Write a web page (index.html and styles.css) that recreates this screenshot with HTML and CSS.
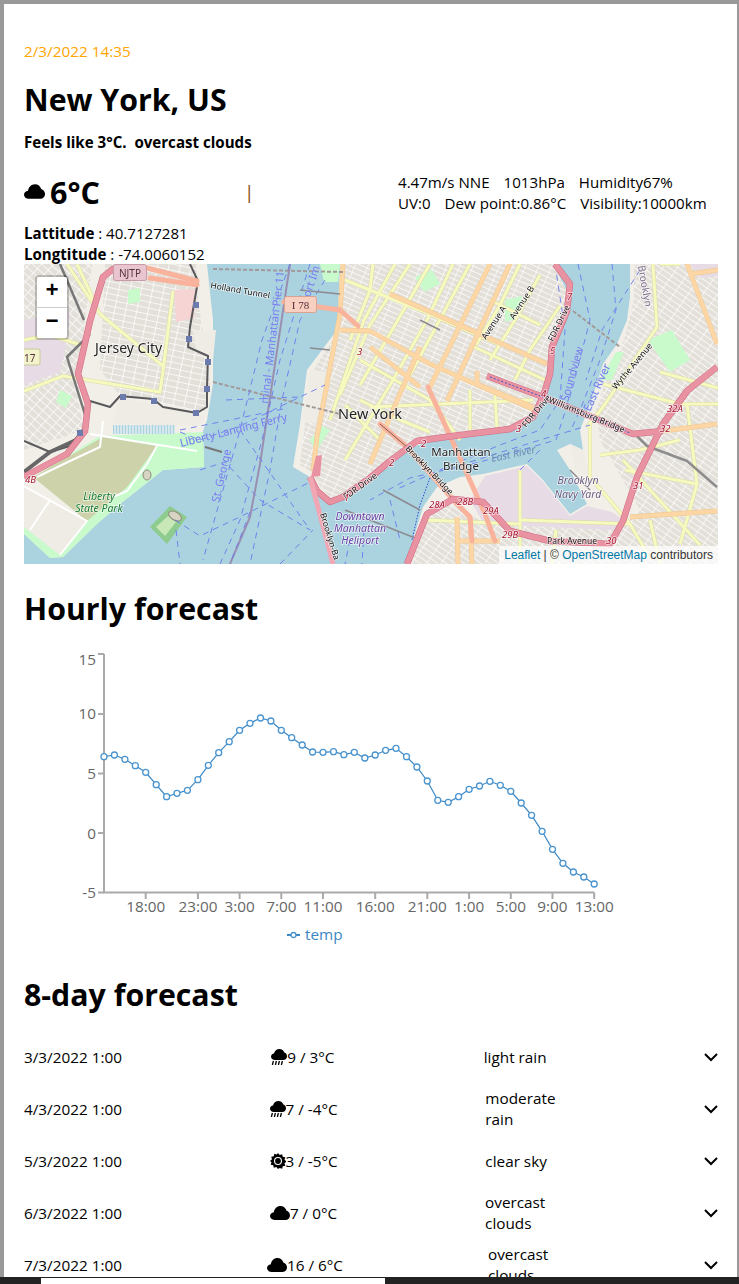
FILE: index.html
```html
<!DOCTYPE html>
<html lang="en">
  <head>
    <meta charset="UTF-8" />
    <meta name="viewport" content="width=device-width, initial-scale=1.0" />
    <title>Weather</title>
    <link rel="stylesheet" href="styles.css">
  </head>
  <body>
    <svg class="icon-defs" width="0" height="0">
      <defs>
        <symbol id="i-cloud" viewBox="0 0 20 14">
          <path d="M4.5 14C2 14 0 12.3 0 10.1 0 8 1.7 6.4 3.8 6.2 4.3 2.7 7 0 10.4 0c2.900 0 5.300 1.900 6 4.600 1.900.5 3.600 2.600 3.600 4.800 0 2.700-2 4.600-4.600 4.600z" />
        </symbol>
        <symbol id="i-rain" viewBox="0 0 16 16">
          <path d="M3.800 11C1.700 11 0 9.600 0 7.700 0 6 1.300 4.700 3 4.500 3.500 1.800 5.700 0 8.400 0c2.400 0 4.400 1.500 5 3.600 1.500.4 2.600 1.900 2.600 3.600 0 2.200-1.600 3.800-3.700 3.800z" />
          <path class="i-drops" d="M2.400 12 1.400 16M5.400 12 4.400 16M8.400 12 7.400 16M11.400 12 10.400 16" />
        </symbol>
        <symbol id="i-sun" viewBox="0 0 16 16">
          <path fill-rule="evenodd" d="M8 0l1.700 2 2.500-.8.500 2.600 2.600.5-.8 2.500 2 1.700-2 1.700.8 2.500-2.600.5-.5 2.600-2.500-.8L8 16l-1.700-2-2.500.8-.5-2.600-2.600-.5.8-2.500L0 8l2-1.700-.8-2.500 2.600-.5.5-2.600 2.500.8zM8 4a4 4 0 1 0 0 8 4 4 0 0 0 0-8z" />
          <circle cx="8" cy="8" r="2.900" />
        </symbol>
        <symbol id="i-chevron" viewBox="0 0 16 16">
          <path class="i-chev" d="M2 5l6 6 6-6" />
        </symbol>
      </defs>
    </svg>

    <div class="page">
      <p class="stamp">2/3/2022 14:35</p>
      <h1>New York, US</h1>
      <p class="feels">Feels like 3°C.&nbsp; overcast clouds</p>

      <div class="now">
        <div class="now-temp">
          <svg class="now-icon"><use href="#i-cloud" /></svg>
          <span>6°C</span>
        </div>
        <span class="now-sep">|</span>
        <div class="now-stats">
          <div class="stat-row">
            <span>4.47m/s NNE</span>
            <span>1013hPa</span>
            <span>Humidity67%</span>
          </div>
          <div class="stat-row">
            <span>UV:0</span>
            <span>Dew point:0.86°C</span>
            <span>Visibility:10000km</span>
          </div>
        </div>
      </div>

      <div class="coords">
        <div><b>Lattitude</b> : 40.7127281</div>
        <div><b>Longtitude</b> : -74.0060152</div>
      </div>

      <div class="map">
        <svg class="map-art" viewBox="24 264 694 300" width="694" height="300">
          <defs>
            <pattern id="g-jersey" width="11" height="6" patternUnits="userSpaceOnUse" patternTransform="rotate(12)">
              <rect width="11" height="6" fill="#e3dfd9" />
              <path d="M0 0H11M0 0V6" stroke="#fff" stroke-width="1.5" />
            </pattern>
            <pattern id="g-west" width="9" height="6" patternUnits="userSpaceOnUse" patternTransform="rotate(42)">
              <rect width="9" height="6" fill="#e3dfd9" />
              <path d="M0 0H9M0 0V6" stroke="#fff" stroke-width="1.4" />
            </pattern>
            <pattern id="g-man" width="12" height="5" patternUnits="userSpaceOnUse" patternTransform="rotate(24)">
              <rect width="12" height="5" fill="#e3dfd9" />
              <path d="M0 0H12M0 0V5" stroke="#fff" stroke-width="1.3" />
            </pattern>
            <pattern id="g-bk" width="12" height="5" patternUnits="userSpaceOnUse" patternTransform="rotate(35)">
              <rect width="12" height="5" fill="#e3dfd9" />
              <path d="M0 0H12M0 0V5" stroke="#fff" stroke-width="1.3" />
            </pattern>
            <pattern id="g-marina" width="3" height="8" patternUnits="userSpaceOnUse">
              <rect width="3" height="8" fill="#aad3df" />
              <path d="M1 0V8" stroke="#f4f7f7" stroke-width="1.2" />
            </pattern>
          </defs>

          <rect class="m-water" x="24" y="264" width="694" height="300" />

          <path class="m-land" d="M24 264H207L213 320 213 384 207 420 203 431 204 467 163 470 120 504 97 524 63 557 50 558 24 534Z" />
          <path class="m-land" d="M340 264H553L570 297 553 347 550 380 537 414 513 427 453 434 403 450 370 480 333 504 320 490 310 477 293 467 300 424 307 370 337 330Z" />
          <path class="m-land" d="M630 264H718V564H407L413 540 423 507 437 487 460 477 483 474 527 464 543 480 570 514 587 504 570 470 557 450 570 444 583 450 580 430 590 404 603 364 617 344 627 320 630 297Z" />

          <path fill="url(#g-jersey)" d="M105 264H196L198 300 204 340 210 384 205 412 120 395 100 370Z" />
          <path fill="url(#g-west)" d="M24 264H92L84 330 78 400 84 430 24 450Z" />
          <path fill="url(#g-man)" d="M342 264H553L570 297 553 347 550 380 537 414 513 427 453 434 403 450 370 478 333 500 320 486 312 472 300 465 305 424 312 372 338 332Z" />
          <path fill="url(#g-bk)" d="M634 264H718V564H410L426 510 440 500 480 520 620 528 640 510 600 440 596 410 610 368 624 340 634 300Z" />

          <path class="m-pink" d="M485 476 527 466 543 482 570 516 587 506 612 512 626 522 612 530 484 524 470 500Z" />
          <path class="m-pink" d="M24 320 70 310 66 345 60 372 24 385Z" />
          <path class="m-pink" d="M690 264H718V276L700 278Z" />
          <path class="m-block" d="M174 290 196 289 194 318 176 322Z" />
          <path class="m-grey" d="M193 330H216L213 360 196 350Z" />
          <path class="m-grey" d="M120 396 160 406 205 416 200 426 112 424Z" />
          <path class="m-grey" d="M24 484 87 521 60 555 24 527Z" />
          <path class="m-grey" d="M310 370 330 372 316 424 302 420Z" />
          <path class="m-grey" d="M570 444 583 450 590 476 575 470Z" />

          <path class="m-park" d="M100 436 203 432 204 467 163 470 120 504 97 524 63 557 50 558 24 534 24 527 60 555 87 521 33 477Z" />
          <path class="m-forest" d="M33 477 103 437 157 446 127 487 87 521Z" />
          <rect class="m-marina" x="113" y="425" width="62" height="9" />
          <path class="m-park" d="M320 264 340 264 338 282 324 282Z" />
          <path class="m-park" d="M600 380 616 352 624 352 612 380Z" />
          <path class="m-park" d="M648 340 672 330 690 360 670 372Z" />
          <path class="m-park" d="M505 300 522 296 518 318 505 322Z" />
          <path class="m-park" d="M415 277 432 270 440 284 424 292Z" />
          <path class="m-park" d="M128 290 140 288 140 302 128 304Z" />
          <path class="m-park" d="M60 390 72 396 66 408 56 402Z" />
          <path class="m-park" d="M310 440 322 426 330 430 316 452Z" />

          <path class="m-island" d="M150 527 170 506 187 517 167 544Z" />
          <path class="m-island-in" d="M156 527 168 516 176 522 165 536Z" />
          <ellipse class="m-star" cx="175" cy="516" rx="7" ry="4" transform="rotate(30 175 516)" />
          <ellipse class="m-star" cx="147" cy="475" rx="4" ry="5" />

          <g class="m-white">
            <path d="M157 446 147 464 127 491 113 497" />
            <path d="M90 434 197 451" />
            <path d="M103 421 100 447 70 461 37 477" />
            <path d="M24 486 87 521 60 555" />
            <path d="M50 500 30 530" />
          </g>

          <g id="r-yellow">
            <path d="M24 391 63 376 160 392 163 371 173 291" />
            <path d="M100 314 163 366" />
            <path d="M67 264 100 314" />
            <path d="M77 264 96 305" />
            <path d="M24 340 50 335 84 346" />
            <path d="M373 264 370 290 350 340" />
            <path d="M395 264 364 320 330 420" />
            <path d="M410 264 370 325 340 395" />
            <path d="M430 264 395 325 360 385" />
            <path d="M453 264 427 320 393 380 345 460" />
            <path d="M470 264 445 310 410 375" />
            <path d="M520 264 500 305 476 345" />
            <path d="M540 275 515 320 490 360" />
            <path d="M560 306 530 350 515 380" />
            <path d="M370 407 533 400" />
            <path d="M360 360 430 400 460 440" />
            <path d="M345 405 380 440" />
            <path d="M470 345 545 380" />
            <path d="M490 300 540 325" />
            <path d="M345 280 420 310 500 345" />
            <path d="M360 400 400 420 430 432" />
            <path d="M470 390 470 430" />
            <path d="M495 395 497 428" />
            <path d="M653 264 657 327 603 407 587 427" />
            <path d="M590 424 590 477 630 524 650 558" />
            <path d="M625 470 697 484" />
            <path d="M623 460 700 545" />
            <path d="M603 384 680 404 718 404" />
            <path d="M687 404 697 484 680 544" />
            <path d="M520 520 630 524" />
            <path d="M520 470 520 564" />
            <path d="M556 530 552 564" />
            <path d="M660 264 680 264" />
            <path d="M660 372 718 388" />
            <path d="M600 455 640 450 680 440" />
            <path d="M425 520 520 524" />
            <path d="M650 520 660 564" />
          </g>
          <use href="#r-yellow" class="road-case" />
          <use href="#r-yellow" class="road-yellow" />

          <g id="r-orange">
            <path d="M343 264 340 314 317 437 313 471" />
            <path d="M390 294 547 364" />
            <path d="M490 264 430 387" />
            <path d="M510 264 447 401" />
            <path d="M370 331 430 364 537 411" />
            <path d="M477 371 477 384 533 407" />
            <path d="M370 347 420 387" />
            <path d="M420 347 370 464" />
            <path d="M340 330 370 331" />
            <path d="M687 264 717 344" />
            <path d="M663 431 717 424" />
            <path d="M630 517 717 511" />
            <path d="M457 517 458 564" />
            <path d="M457 541 500 541" />
            <path d="M470 517 472 564" />
            <path d="M690 274 718 270" />
          </g>
          <use href="#r-orange" class="road-case-o" />
          <use href="#r-orange" class="road-orange" />

          <path class="m-border" d="M213 269 343 272" />
          <path class="m-border" d="M213 382 340 414" />
          <path class="m-border" d="M573 311 620 347" />
          <path class="m-channel" d="M290 264 260 464 250 517 230 564" />

          <g class="m-ferry">
            <path d="M290 264 262 340 240 430 203 560" />
            <path d="M310 264 280 360 262 440 240 520 220 564" />
            <path d="M325 280 300 320 282 400 270 470 250 564" />
            <path d="M180 432 200 440 240 426 300 397 325 385" />
            <path d="M226 400 300 397" />
            <path d="M180 430 230 420 288 408" />
            <path d="M200 470 225 462 260 500 310 530" />
            <path d="M240 430 310 530" />
            <path d="M175 520 200 536 250 512 310 482" />
            <path d="M176 530 180 564" />
            <path d="M250 512 230 564" />
            <path d="M280 564 313 530" />
            <path d="M350 540 345 564" />
            <path d="M364 530 362 564" />
            <path d="M390 500 400 540" />
            <path d="M555 264 565 330 560 400 540 430 500 445 440 470 395 490" />
            <path d="M578 264 590 320 572 390 556 440 480 462 410 478 370 500" />
            <path d="M612 264 616 310 600 360 580 410 570 432" />
            <path d="M640 270 602 330 586 380" />
            <path d="M470 462 540 440 590 425" />
            <path d="M520 470 540 450" />
          </g>
          <path class="m-ferry-dots" d="M430 478 420 505 412 540" />
          <path class="m-ferry-dots" d="M490 378 540 396 630 432" />

          <g class="m-rail">
            <path d="M190 264 198 281 190 327 188 347 208 356 207 387 207 407 197 413 163 407 153 399 120 396 110 407 90 401" />
            <path d="M24 441 50 452 70 446 86 425" />
          </g>
          <path class="m-rail-thin" d="M90 334 67 357 87 421" />
          <path class="m-rail-thin" d="M60 264 84 320" />
          <path class="m-rail-wide" d="M24 472 50 452 76 440" />
          <path class="m-rail-heavy" d="M633 432 647 446 687 461 717 487" />
          <path class="m-pier" d="M205 447 222 452" />
          <g class="m-pier-lines">
            <path d="M300 290 340 294" />
            <path d="M330 350 310 348" />
            <path d="M570 470 590 490" />
            <path d="M383 490 420 510" />
            <path d="M345 510 420 540" />
            <path d="M420 320 440 330" />
          </g>

          <g id="r-salmon">
            <path d="M428 387 485 514 495 541" />
            <path d="M380 424 407 447 457 504 470 517 472 541" />
            <path d="M147 268 197 281" />
            <path d="M150 278 197 285" />
            <path d="M284 302 340 310" />
            <path d="M340 310 358 326" />
          </g>
          <use href="#r-salmon" class="road-salmon" />
          <path class="m-deck" d="M380 424 407 447 457 504" />

          <g id="r-motor">
            <path d="M125 264 113 269 103 277 90 321 78 374 88 404 85 431 67 454 33 472 24 477" />
            <path d="M555 264 570 284 567 311 552 347 550 374 543 397 533 417 510 429 453 436 417 441 390 461 370 478 343 497 330 502 317 491 310 477" />
            <path d="M407 564 427 514 453 499 483 502 510 531 550 541 610 544 623 521 637 477 663 424 687 391 717 367" />
            <path d="M487 376 543 397 633 434 663 431" />
          </g>
          <use href="#r-motor" class="road-motor-case" />
          <use href="#r-motor" class="road-motor" />
          <path class="m-tunnel" d="M310 477 333 564" />
          <path class="m-deck-dot" d="M490 377 543 397 630 433" />
          <path class="m-plaza" d="M311 477 316 456 322 455 320 476Z" />

          <text class="t-place" x="95" y="353">Jersey City</text>
          <text class="t-place t-ny" x="338" y="419">New York</text>
          <text class="t-place t-bridge" x="461" y="456" text-anchor="middle">Manhattan</text>
          <text class="t-place t-bridge" x="461" y="470" text-anchor="middle">Bridge</text>

          <text class="t-park" x="99" y="500" text-anchor="middle">Liberty</text>
          <text class="t-park" x="99" y="512" text-anchor="middle">State Park</text>
          <text class="t-heli" x="360" y="520" text-anchor="middle">Downtown</text>
          <text class="t-heli" x="360" y="532" text-anchor="middle">Manhattan</text>
          <text class="t-heli" x="360" y="544" text-anchor="middle">Heliport</text>
          <text class="t-navy" x="578" y="484" text-anchor="middle">Brooklyn</text>
          <text class="t-navy" x="578" y="498" text-anchor="middle">Navy Yard</text>

          <text class="t-ferry" transform="translate(181 447) rotate(-14)">Liberty Landing Ferry</text>
          <text class="t-ferry" transform="translate(219 503) rotate(-77)">St. George</text>
          <text class="t-ferry" transform="translate(268 404) rotate(-83)">minal - Manhattan Pier 11</text>
          <text class="t-ferry" transform="translate(308 304) rotate(-72)">Port Im</text>
          <text class="t-ferry" transform="translate(568 402) rotate(-74)">Soundview</text>
          <text class="t-ferry" transform="translate(590 412) rotate(-66)">East River</text>
          <text class="t-water" transform="translate(492 462) rotate(-12)">East River</text>
          <text class="t-boro" transform="translate(638 266) rotate(80)">Brooklyn</text>

          <text class="t-road" transform="translate(320 514) rotate(73)">Brooklyn-Ba</text>
          <text class="t-road" transform="translate(210 288) rotate(10)">Holland Tunnel</text>
          <text class="t-road" transform="translate(553 342) rotate(-64)">FDR Drive</text>
          <text class="t-road" transform="translate(526 428) rotate(-50)">FDR Drive</text>
          <text class="t-road" transform="translate(346 500) rotate(-36)">FDR Drive</text>
          <text class="t-road" transform="translate(548 402) rotate(22)">Williamsburg Bridge</text>
          <text class="t-road" transform="translate(405 449) rotate(46)">Brooklyn Bridge</text>
          <text class="t-road" x="547" y="544">Park Avenue</text>
          <text class="t-road" transform="translate(616 390) rotate(-50)">Wythe Avenue</text>
          <text class="t-road" transform="translate(486 340) rotate(-57)">Avenue A</text>
          <text class="t-road" transform="translate(514 320) rotate(-57)">Avenue B</text>

          <text class="t-exit" x="567" y="300">7</text>
          <text class="t-exit" x="550" y="354">5</text>
          <text class="t-exit" x="541" y="397">4</text>
          <text class="t-exit" x="516" y="432">3</text>
          <text class="t-exit" x="357" y="355">3</text>
          <text class="t-exit" x="421" y="447">2</text>
          <text class="t-exit" x="389" y="466">2</text>
          <text class="t-exit" x="344" y="501">1</text>
          <text class="t-exit" x="429" y="508">28A</text>
          <text class="t-exit" x="457" y="505">28B</text>
          <text class="t-exit" x="483" y="514">29A</text>
          <text class="t-exit" x="502" y="538">29B</text>
          <text class="t-exit" x="606" y="544">30</text>
          <text class="t-exit" x="633" y="489">31</text>
          <text class="t-exit" x="660" y="432">32</text>
          <text class="t-exit" x="667" y="412">32A</text>
          <text class="t-exit" x="25" y="483">4B</text>

          <rect class="shield-nj" x="113.5" y="264.5" width="33" height="16" rx="2" />
          <text class="t-shield" x="130" y="277" text-anchor="middle">NJTP</text>
          <rect class="shield-i" x="284.5" y="296.5" width="32" height="16" rx="2" />
          <text class="t-shield t-i78" x="300.5" y="309" text-anchor="middle">I 78</text>
          <rect class="shield-17" x="20" y="349" width="20" height="16" rx="2" />
          <text class="t-shield" x="24" y="362">17</text>

          <g class="m-stations">
            <rect x="193" y="302" width="6" height="6" />
            <rect x="186" y="336" width="6" height="6" />
            <rect x="205" y="359" width="6" height="6" />
            <rect x="204" y="386" width="6" height="6" />
            <rect x="193" y="410" width="6" height="6" />
            <rect x="151" y="398" width="6" height="6" />
            <rect x="120" y="394" width="6" height="6" />
            <rect x="77" y="430" width="6" height="6" />
          </g>
        </svg>

        <div class="map-zoom">
          <a class="zoom-btn">+</a>
          <a class="zoom-btn">−</a>
        </div>
        <div class="map-credit"><a>Leaflet</a> | © <a>OpenStreetMap</a> contributors</div>
      </div>

      <h2 class="hourly-title">Hourly forecast</h2>

      <svg class="chart" viewBox="24 630 694 344" width="694" height="344">
        <path class="axis" d="M104 654V892.5H594.2" />
        <path class="axis" d="M98 654H104M98 714H104M98 773.5H104M98 833H104M98 892.5H104" />
        <path class="axis" d="M145.7 892.5V899M197.9 892.5V899M239.6 892.5V899M281.3 892.5V899M323 892.5V899M375.2 892.5V899M427.3 892.5V899M469.1 892.5V899M510.8 892.5V899M552.5 892.5V899M594.2 892.5V899" />

        <g class="tick-y">
          <text x="96" y="665">15</text>
          <text x="96" y="719">10</text>
          <text x="96" y="779">5</text>
          <text x="96" y="839">0</text>
          <text x="96" y="898">-5</text>
        </g>
        <g class="tick-x">
          <text x="145.7" y="912">18:00</text>
          <text x="197.9" y="912">23:00</text>
          <text x="239.6" y="912">3:00</text>
          <text x="281.3" y="912">7:00</text>
          <text x="323" y="912">11:00</text>
          <text x="375.2" y="912">16:00</text>
          <text x="427.3" y="912">21:00</text>
          <text x="469.1" y="912">1:00</text>
          <text x="510.8" y="912">5:00</text>
          <text x="552.5" y="912">9:00</text>
          <text x="594.2" y="912">13:00</text>
        </g>

        <polyline class="temp-line" points="104,756.7 114.4,755 124.9,759.3 135.3,765.7 145.7,772.3 156.2,784.7 166.6,796.7 177,793.3 187.4,790.3 197.9,779.7 208.3,765.3 218.7,752.7 229.2,741.7 239.6,730.3 250,723.3 260.5,718 270.9,721 281.3,730.3 291.7,737.7 302.2,745 312.6,752 323,752.3 333.5,751.7 343.9,754.7 354.3,752.3 364.8,758 375.2,755 385.6,750.3 396,748.3 406.5,756.7 416.9,767 427.3,781 437.8,800.3 448.2,802.3 458.6,796.7 469.1,789.3 479.5,786 489.9,781.3 500.3,785.3 510.8,791.3 521.2,803 531.6,815.3 542.1,831.3 552.5,849.3 562.9,863.3 573.4,872 583.8,877 594.2,884" />
        <g class="temp-dots">
          <circle cx="104" cy="756.7" r="3" />
          <circle cx="114.4" cy="755" r="3" />
          <circle cx="124.9" cy="759.3" r="3" />
          <circle cx="135.3" cy="765.7" r="3" />
          <circle cx="145.7" cy="772.3" r="3" />
          <circle cx="156.2" cy="784.7" r="3" />
          <circle cx="166.6" cy="796.7" r="3" />
          <circle cx="177" cy="793.3" r="3" />
          <circle cx="187.4" cy="790.3" r="3" />
          <circle cx="197.9" cy="779.7" r="3" />
          <circle cx="208.3" cy="765.3" r="3" />
          <circle cx="218.7" cy="752.7" r="3" />
          <circle cx="229.2" cy="741.7" r="3" />
          <circle cx="239.6" cy="730.3" r="3" />
          <circle cx="250" cy="723.3" r="3" />
          <circle cx="260.5" cy="718" r="3" />
          <circle cx="270.9" cy="721" r="3" />
          <circle cx="281.3" cy="730.3" r="3" />
          <circle cx="291.7" cy="737.7" r="3" />
          <circle cx="302.2" cy="745" r="3" />
          <circle cx="312.6" cy="752" r="3" />
          <circle cx="323" cy="752.3" r="3" />
          <circle cx="333.5" cy="751.7" r="3" />
          <circle cx="343.9" cy="754.7" r="3" />
          <circle cx="354.3" cy="752.3" r="3" />
          <circle cx="364.8" cy="758" r="3" />
          <circle cx="375.2" cy="755" r="3" />
          <circle cx="385.6" cy="750.3" r="3" />
          <circle cx="396" cy="748.3" r="3" />
          <circle cx="406.5" cy="756.7" r="3" />
          <circle cx="416.9" cy="767" r="3" />
          <circle cx="427.3" cy="781" r="3" />
          <circle cx="437.8" cy="800.3" r="3" />
          <circle cx="448.2" cy="802.3" r="3" />
          <circle cx="458.6" cy="796.7" r="3" />
          <circle cx="469.1" cy="789.3" r="3" />
          <circle cx="479.5" cy="786" r="3" />
          <circle cx="489.9" cy="781.3" r="3" />
          <circle cx="500.3" cy="785.3" r="3" />
          <circle cx="510.8" cy="791.3" r="3" />
          <circle cx="521.2" cy="803" r="3" />
          <circle cx="531.6" cy="815.3" r="3" />
          <circle cx="542.1" cy="831.3" r="3" />
          <circle cx="552.5" cy="849.3" r="3" />
          <circle cx="562.9" cy="863.3" r="3" />
          <circle cx="573.4" cy="872" r="3" />
          <circle cx="583.8" cy="877" r="3" />
          <circle cx="594.2" cy="884" r="3" />
        </g>

        <path class="temp-line legend-line" d="M287 935H300" />
        <circle class="legend-dot" cx="293.5" cy="935" r="2.5" />
        <text class="legend-text" x="305" y="940">temp</text>
      </svg>

      <h2 class="daily-title">8-day forecast</h2>

      <div class="days">
        <div class="day">
          <span class="day-date">3/3/2022 1:00</span>
          <span class="day-temp"><svg class="day-icon"><use href="#i-rain" /></svg>9 / 3°C</span>
          <span class="day-desc">light rain</span>
          <svg class="day-chev"><use href="#i-chevron" /></svg>
        </div>
        <div class="day">
          <span class="day-date">4/3/2022 1:00</span>
          <span class="day-temp"><svg class="day-icon"><use href="#i-rain" /></svg>7 / -4°C</span>
          <span class="day-desc">moderate rain</span>
          <svg class="day-chev"><use href="#i-chevron" /></svg>
        </div>
        <div class="day">
          <span class="day-date">5/3/2022 1:00</span>
          <span class="day-temp"><svg class="day-icon"><use href="#i-sun" /></svg>3 / -5°C</span>
          <span class="day-desc">clear sky</span>
          <svg class="day-chev"><use href="#i-chevron" /></svg>
        </div>
        <div class="day">
          <span class="day-date">6/3/2022 1:00</span>
          <span class="day-temp"><svg class="day-icon day-icon-wide"><use href="#i-cloud" /></svg>7 / 0°C</span>
          <span class="day-desc">overcast clouds</span>
          <svg class="day-chev"><use href="#i-chevron" /></svg>
        </div>
        <div class="day">
          <span class="day-date">7/3/2022 1:00</span>
          <span class="day-temp"><svg class="day-icon day-icon-wide"><use href="#i-cloud" /></svg>16 / 6°C</span>
          <span class="day-desc">overcast clouds</span>
          <svg class="day-chev"><use href="#i-chevron" /></svg>
        </div>
      </div>
    </div>

    <div class="hscroll"><div class="hscroll-thumb"></div></div>
  </body>
</html>
```

FILE: styles.css
```css
html,
body {
  margin: 0;
  height: 1284px;
  overflow: hidden;
  background: #fff;
}
body {
  font-family: "Open Sans", "Noto Sans", sans-serif;
  font-size: 15.3px;
  line-height: 21px;
  color: #000;
}
.icon-defs {
  position: absolute;
}
.page {
  box-sizing: border-box;
  height: 1284px;
  border-top: 4px solid #999;
  border-left: 4px solid #999;
  border-right: 2px solid #999;
  padding: 35px 19px 0 20px;
}
p {
  margin: 0;
}
.stamp {
  color: orange;
  line-height: 24px;
}
h1,
h2 {
  margin: 0;
  font-size: 30.3px;
  line-height: 42px;
  font-weight: 700;
}
h1 {
  margin-top: 16px;
}
.feels {
  margin-top: 11px;
  font-size: 15.1px;
  font-weight: 700;
}
.now {
  display: flex;
  height: 42px;
  margin-top: 18px;
}
.now-temp {
  display: flex;
  align-items: center;
  width: 220px;
  gap: 5px;
  font-size: 30.5px;
  font-weight: 700;
  line-height: 42px;
}
.now-icon {
  width: 21px;
  height: 15px;
  margin-top: -2px;
}
.now-sep {
  width: 154px;
  color: #8a4a10;
  font-size: 19px;
  line-height: 42px;
}
.now-stats {
  flex: 1;
  padding-top: 1px;
  font-size: 15.1px;
}
.stat-row {
  display: flex;
  gap: 14px;
  white-space: nowrap;
}
.coords {
  height: 41px;
  margin-top: 10px;
  font-size: 15.1px;
}
.map {
  position: relative;
  width: 694px;
  height: 300px;
  overflow: hidden;
}
.map-art {
  display: block;
  filter: blur(0.35px);
}
.map-zoom {
  position: absolute;
  top: 11px;
  left: 11px;
  border: 2px solid rgba(0, 0, 0, 0.2);
  border-radius: 4px;
  background-clip: padding-box;
}
.zoom-btn {
  display: block;
  width: 30px;
  height: 30px;
  background: #fff;
  color: #000;
  font: bold 22px/30px "Liberation Mono", monospace;
  text-align: center;
}
.zoom-btn:first-child {
  border-bottom: 1px solid #ccc;
  border-radius: 2px 2px 0 0;
}
.zoom-btn:last-child {
  border-radius: 0 0 2px 2px;
}
.map-credit {
  position: absolute;
  right: 0;
  bottom: 0;
  padding: 0 5px;
  background: rgba(255, 255, 255, 0.7);
  color: #333;
  font: 12px/18px "Liberation Sans", Arial, sans-serif;
}
.map-credit a {
  color: #0078a8;
}

/* map layers */
.m-water {
  fill: #aad3df;
}
.m-land {
  fill: #f2efe9;
}
.m-pink {
  fill: #e7dce6;
}
.m-block {
  fill: #f6d4d4;
}
.m-grey {
  fill: #efece5;
}
.m-park {
  fill: #c8facc;
}
.m-forest {
  fill: #cdd2ab;
}
.m-marina {
  fill: url(#g-marina);
}
.m-island {
  fill: #8ecb8e;
}
.m-island-in {
  fill: #c8e8b8;
}
.m-star {
  fill: #d8d4c4;
  stroke: #8b8b7a;
}
#r-yellow,
#r-orange,
#r-salmon,
#r-motor {
  fill: none;
}
.road-case,
.road-case-o,
.road-yellow,
.road-orange,
.road-salmon,
.road-motor,
.road-motor-case,
.m-white,
.m-tunnel,
.m-channel,
.m-border,
.m-ferry,
.m-ferry-dots,
.m-rail,
.m-rail-thin,
.m-rail-wide,
.m-rail-heavy,
.m-pier,
.m-pier-lines,
.m-deck,
.m-deck-dot {
  fill: none;
  stroke-linejoin: round;
}
.m-white {
  stroke: #fff;
  stroke-width: 2;
}
.road-case {
  stroke: #d8d8a8;
  stroke-width: 4;
}
.road-yellow {
  stroke: #f7fabf;
  stroke-width: 3;
}
.road-case-o {
  stroke: #edc68f;
  stroke-width: 4.8;
}
.road-orange {
  stroke: #fcd6a4;
  stroke-width: 4;
}
.road-salmon {
  stroke: #f9b29c;
  stroke-width: 5;
  stroke-linecap: round;
}
.road-motor-case {
  stroke: #cf6a84;
  stroke-width: 6.5;
}
.road-motor {
  stroke: #e892a2;
  stroke-width: 5.5;
}
.m-tunnel {
  stroke: #f0a7b3;
  stroke-width: 5;
}
.m-plaza {
  fill: #e892a2;
}
.m-channel {
  stroke: #9a8fb2;
  stroke-width: 2;
}
.m-border {
  stroke: #a29a9a;
  stroke-width: 2;
  stroke-dasharray: 4 2;
}
.m-ferry {
  stroke: #6a78ee;
  stroke-width: 0.9;
  stroke-dasharray: 6 5;
}
.m-ferry-dots {
  stroke: #2c4fd8;
  stroke-width: 1;
  stroke-dasharray: 1.5 1.5;
}
.m-rail {
  stroke: #59595c;
  stroke-width: 2;
}
.m-rail-thin {
  stroke: #777;
  stroke-width: 2.5;
}
.m-rail-wide {
  stroke: #666;
  stroke-width: 4;
}
.m-rail-heavy {
  stroke: #8d8d8d;
  stroke-width: 2.5;
}
.m-pier {
  stroke: #777;
  stroke-width: 2;
}
.m-pier-lines {
  stroke: #8c8a90;
  stroke-width: 1.5;
}
.m-deck {
  stroke: #5f4a45;
  stroke-width: 0.8;
}
.m-deck-dot {
  stroke: #3558c8;
  stroke-width: 1;
  stroke-dasharray: 2 2;
}
.m-stations rect {
  fill: #6b7bad;
}
.shield-nj {
  fill: #e8c5cf;
  stroke: #c99aa8;
}
.shield-i {
  fill: #f8cfc0;
  stroke: #d8a390;
}
.shield-17 {
  fill: #f2f3cb;
  stroke: #c9c99a;
}
.map-art text {
  font-family: "Noto Sans", "Open Sans", sans-serif;
  paint-order: stroke;
  stroke: rgba(255, 255, 255, 0.7);
  stroke-width: 1.5px;
}
.t-place {
  font-size: 14px;
  fill: #222;
}
.t-ny {
  font-size: 14.5px;
}
.t-bridge {
  font-size: 11.5px;
}
.t-park {
  font-size: 10.5px;
  font-style: italic;
  fill: #167d2e;
}
.t-heli {
  font-size: 10.5px;
  font-style: italic;
  fill: #6a3fa3;
}
.t-navy {
  font-size: 10.5px;
  font-style: italic;
  fill: #6d5a80;
}
.map-art .t-ferry {
  font-size: 11px;
  fill: #7a7af0;
  stroke-width: 0.8px;
  stroke: rgba(170, 211, 223, 0.6);
}
.map-art .t-water {
  font-size: 10.5px;
  font-style: italic;
  fill: #6c8db5;
  stroke: none;
}
.t-boro {
  font-size: 10px;
  fill: #7b6a8a;
}
.t-road {
  font-size: 8.5px;
  fill: #111;
}
.t-exit {
  font-size: 9.5px;
  font-style: italic;
  fill: #a5142e;
}
.map-art .t-shield {
  font-size: 10px;
  fill: #54303c;
  stroke: none;
}
.map-art .t-i78 {
  font-family: "Liberation Serif", serif;
  font-size: 11px;
}

/* chart */
.hourly-title {
  margin-top: 24px;
}
.chart {
  display: block;
}
.axis {
  fill: none;
  stroke: #aaa;
  stroke-width: 2;
}
.tick-y text,
.tick-x text {
  fill: #666;
  font-size: 15.3px;
}
.tick-y text {
  text-anchor: end;
}
.tick-x text {
  text-anchor: middle;
}
.temp-line {
  fill: none;
  stroke: #3b87c4;
  stroke-width: 1.2;
}
.temp-dots circle,
.legend-dot {
  fill: #fff;
  stroke: #4a94cf;
  stroke-width: 1.3;
}
.legend-line {
  stroke-width: 2;
}
.legend-text {
  fill: #3b87c4;
  font-size: 15.3px;
}

/* 8-day list */
.daily-title {
  margin-top: 0;
  margin-bottom: 15px;
}
.day {
  display: flex;
  align-items: center;
  justify-content: space-between;
  width: 695px;
  height: 52px;
}
.day-temp {
  display: flex;
  align-items: center;
  white-space: nowrap;
}
.day-icon {
  width: 16px;
  height: 16px;
}
.day-icon-wide {
  width: 20px;
  height: 14px;
}
.i-drops {
  fill: none;
  stroke: #000;
  stroke-width: 1.3;
}
.day-desc {
  width: 70px;
}
.day-chev {
  width: 16px;
  height: 16px;
}
.i-chev {
  fill: none;
  stroke: #000;
  stroke-width: 2;
}

/* page scrollbar strip at the window bottom */
.hscroll {
  position: fixed;
  left: 0;
  right: 0;
  bottom: 0;
  height: 7px;
  background: #222;
}
.hscroll-thumb {
  width: 344px;
  height: 6px;
  margin-left: 41px;
  border-top: 1px solid #222;
  background: #fff;
}
```
